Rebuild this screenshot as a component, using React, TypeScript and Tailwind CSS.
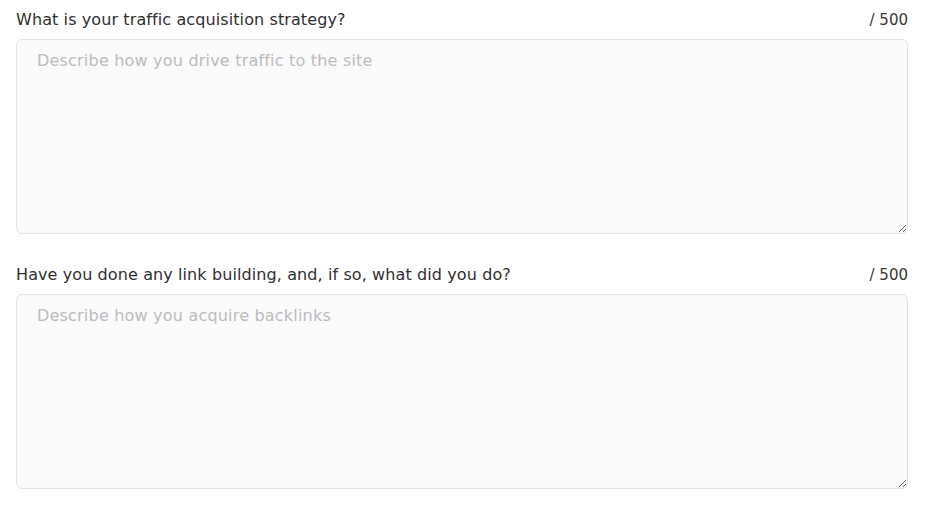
const questions = [
  {
    label: "What is your traffic acquisition strategy?",
    placeholder: "Describe how you drive traffic to the site",
  },
  {
    label: "Have you done any link building, and, if so, what did you do?",
    placeholder: "Describe how you acquire backlinks",
  },
];

const App = () => {
  return (
    <div className="min-h-screen bg-white pl-4 pr-5 pt-[10px] font-['DejaVu_Sans',sans-serif] text-[#222]">
      <div className="flex flex-col gap-[31px]">
        {questions.map((q) => (
          <div key={q.label} className="flex flex-col">
            <div className="flex items-center justify-between h-5 mb-[9px]">
              <label className="text-[16px] leading-5 tracking-[0.1px] text-[#303030]">{q.label}</label>
              <span className="text-[15px] leading-5 text-[#383838]">/ 500</span>
            </div>
            <textarea
              placeholder={q.placeholder}
              className="block w-full h-[195px] resize-y rounded-md border border-[#e4e4e7] bg-[#fafafa] px-5 py-[9px] text-[16px] leading-6 tracking-[0.2px] text-[#222] placeholder:text-[#bcbcc0] outline-none"
            />
          </div>
        ))}
      </div>
    </div>
  );
};

export default App;
